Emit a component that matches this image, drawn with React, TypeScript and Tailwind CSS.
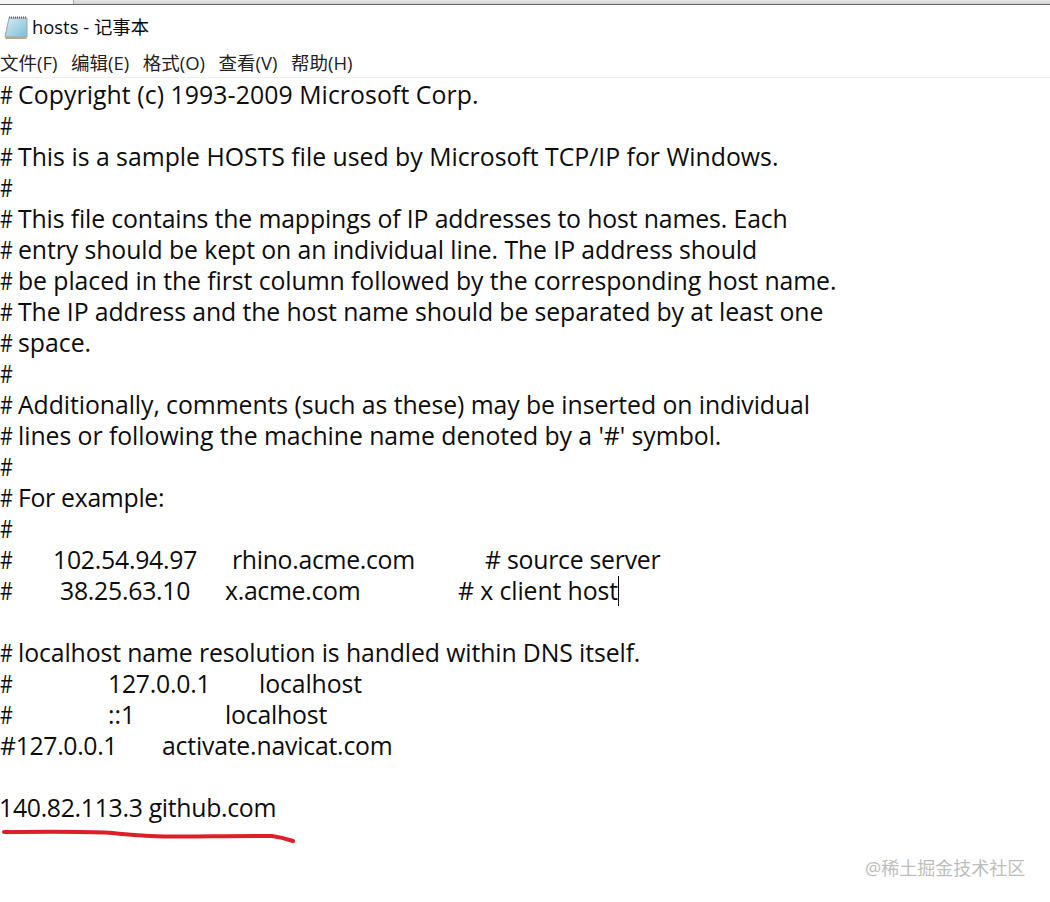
type Seg = { text: string; cls?: string };

const H = 'w-[18px]';

const LINES: Seg[][] = [
  [{ text: '#', cls: H }, { text: 'Copyright (c) 1993-2009 Microsoft Corp.', cls: 'tracking-[0.08px]' }],
  [{ text: '#' }],
  [{ text: '#', cls: H }, { text: 'This is a sample HOSTS file used by Microsoft TCP/IP for Windows.' }],
  [{ text: '#' }],
  [{ text: '#', cls: H }, { text: 'This file contains the mappings of IP addresses to host names. Each', cls: 'tracking-[-0.13px]' }],
  [{ text: '#', cls: H }, { text: 'entry should be kept on an individual line. The IP address should', cls: 'tracking-[-0.08px]' }],
  [{ text: '#', cls: H }, { text: 'be placed in the first column followed by the corresponding host name.', cls: 'tracking-[-0.07px]' }],
  [{ text: '#', cls: H }, { text: 'The IP address and the host name should be separated by at least one', cls: 'tracking-[-0.1px]' }],
  [{ text: '#', cls: H }, { text: 'space.' }],
  [{ text: '#' }],
  [{ text: '#', cls: H }, { text: 'Additionally, comments (such as these) may be inserted on individual', cls: 'tracking-[-0.07px]' }],
  [{ text: '#', cls: H }, { text: "lines or following the machine name denoted by a '#' symbol.", cls: 'tracking-[-0.05px]' }],
  [{ text: '#' }],
  [{ text: '#', cls: H }, { text: 'For example:', cls: 'tracking-[-0.3px]' }],
  [{ text: '#' }],
  [
    { text: '#', cls: 'w-[53px]' },
    { text: '102.54.94.97', cls: 'w-[179px] tracking-[-0.25px]' },
    { text: 'rhino.acme.com', cls: 'w-[253px] tracking-[-0.3px]' },
    { text: '# source server', cls: 'tracking-[-0.25px]' },
  ],
  [
    { text: '#', cls: 'w-[60px]' },
    { text: '38.25.63.10', cls: 'w-[165px] tracking-[-0.25px]' },
    { text: 'x.acme.com', cls: 'w-[233px] tracking-[-0.3px]' },
    { text: '# x client host', cls: 'tracking-[-0.1px]' },
  ],
  [],
  [{ text: '#', cls: H }, { text: 'localhost name resolution is handled within DNS itself.', cls: 'tracking-[-0.11px]' }],
  [
    { text: '#', cls: 'w-[108px]' },
    { text: '127.0.0.1', cls: 'w-[151px] tracking-[-0.25px]' },
    { text: 'localhost', cls: 'tracking-[-0.1px]' },
  ],
  [
    { text: '#', cls: 'w-[108px]' },
    { text: '::1', cls: 'w-[117px]' },
    { text: 'localhost', cls: 'tracking-[-0.2px]' },
  ],
  [
    { text: '#127.0.0.1', cls: 'w-[162px] tracking-[-0.35px]' },
    { text: 'activate.navicat.com', cls: 'tracking-[-0.2px]' },
  ],
  [],
  [{ text: '140.82.113.3 github.com', cls: '-ml-px tracking-[-0.3px]' }],
];

const MENU = ['文件(F)', '编辑(E)', '格式(O)', '查看(V)', '帮助(H)'];

const FONT = "font-['Open_Sans','Noto_Sans_CJK_SC',sans-serif]";

function NotepadIcon() {
  return (
    <svg width="24" height="25" viewBox="0 0 24 25" className="shrink-0">
      <defs>
        <linearGradient id="pad" x1="0" y1="0" x2="1" y2="1">
          <stop offset="0" stopColor="#d8ecf5" />
          <stop offset="1" stopColor="#7fbcd6" />
        </linearGradient>
      </defs>
      <path d="M5 3h18v19H1z" fill="url(#pad)" stroke="#9aa5a8" strokeWidth="1" />
      <path d="M5 2.500h18" stroke="#666" strokeWidth="2" strokeDasharray="1 1" />
      <path d="M1.500 23h21" stroke="#b9a988" strokeWidth="2" />
    </svg>
  );
}

export default function App() {
  return (
    <div className={`relative h-[902px] w-[1050px] overflow-hidden bg-white text-[#0c0c0c] ${FONT}`}>
      {/* sliver of the window behind */}
      <div className="flex h-[5px] border-b border-[#666] bg-gradient-to-b from-[#e6e6e6] to-[#cfcfcf]">
        <div className="h-full w-[74px] border-r border-[#aaa] bg-[#f6f6f6]" />
      </div>

      <div className="flex h-[37px] items-center gap-[4px] pl-[4px] pt-[7px] text-[18.400px] leading-[26px]">
        <NotepadIcon />
        <span>hosts - 记事本</span>
      </div>

      <div className="flex h-[36px] items-center gap-[13.500px] border-b border-[#eee] pt-[7px] text-[18.500px] text-[#222]">
        {MENU.map((m) => (
          <span key={m}>{m}</span>
        ))}
      </div>

      <div className="pt-px text-[24.800px] leading-[31px]">
        {LINES.map((segs, i) => (
          <div key={i} className="flex h-[31px] whitespace-pre">
            {segs.map((s, j) => (
              <span key={j} className={`shrink-0 ${s.cls ?? ''}`}>
                {s.text === '#' ? <span className="inline-block origin-left scale-x-[0.8]">#</span> : s.text}
              </span>
            ))}
          </div>
        ))}
      </div>

      {/* text caret */}
      <div className="absolute left-[618px] top-[576px] h-[30px] w-px bg-black" />

      {/* red marker stroke */}
      <svg className="absolute left-0 top-[820px]" width="300" height="30" viewBox="0 0 300 30">
        <path
          d="M4 12C40 11.500 80 11.500 105 12.500C125 14 140 16.500 165 16.500C200 16.500 250 15.500 272 16C280 17 287 19 293 21"
          fill="none"
          stroke="#dc2028"
          strokeWidth="4"
          strokeLinecap="round"
        />
      </svg>

      {/* watermark */}
      <div className="absolute left-[865px] top-[856px] text-[18px] leading-[24px] text-[#bdbdbd]">@稀土掘金技术社区</div>
    </div>
  );
}
